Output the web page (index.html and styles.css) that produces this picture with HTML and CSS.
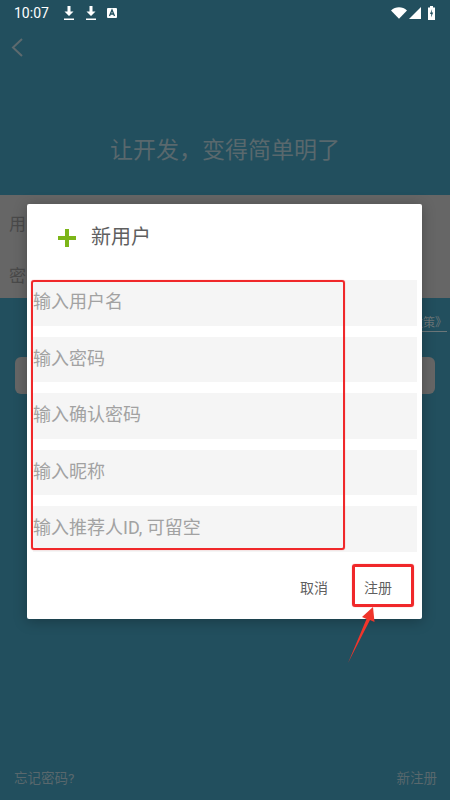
FILE: index.html
```html
<!DOCTYPE html>
<html>
<head lang="en">
    <meta charset="UTF-8">
    <title>新用户</title>
    <link rel="stylesheet" href="styles.css">
</head>
<body>
<div id="page">
    <div class="status">
        <span class="time">10:07</span>
        <svg class="st-icon" width="14" height="16" viewBox="0 0 14 16"><path d="M5.500 1h3v5.500h3L7 11 2.500 6.500h3z" fill="#fff"/><rect x="2" y="13.500" width="10" height="1.500" fill="#fff"/></svg>
        <svg class="st-icon" width="14" height="16" viewBox="0 0 14 16"><path d="M5.500 1h3v5.500h3L7 11 2.500 6.500h3z" fill="#fff"/><rect x="2" y="13.500" width="10" height="1.500" fill="#fff"/></svg>
        <svg class="st-icon" width="12" height="12" viewBox="0 0 12 12"><rect x="1" y="1" width="10" height="10" rx="1" fill="#fff"/><path d="M3.500 9 6 3l2.500 6M4.500 7h3" fill="none" stroke="#224f5e" stroke-width="1.300"/></svg>
        <span class="st-right">
            <svg class="wifi" width="16" height="12" viewBox="0 0 16 12"><path d="M0 3.500C4.500-.7 11.500-.7 16 3.500L8 11.800z" fill="#fff"/></svg>
            <svg class="signal" width="12" height="12" viewBox="0 0 12 12"><path d="M12 0v12H0z" fill="#fff"/></svg>
            <svg width="7" height="14" viewBox="0 0 7 14"><path d="M2 0h3v1.500h2V14H0V1.500h2z" fill="#fff"/><path d="M4.100 3 2 8h1.300L3 11.500 5.200 6.500H3.700z" fill="#224f5e"/></svg>
        </span>
    </div>
    <div class="back">
        <svg width="12" height="19" viewBox="0 0 12 19"><path d="M11 1 2 9.500 11 18" fill="none" stroke="#5d6a6e" stroke-width="2"/></svg>
    </div>
    <h1 class="slogan">让开发，变得简单明了</h1>
    <div class="form">
        <div class="form-row">用</div>
        <div class="form-row">密</div>
    </div>
    <div class="agree"><span>《隐私政策》</span></div>
    <div class="login-btn"></div>
    <div class="footer">
        <span>忘记密码?</span>
        <span>新注册</span>
    </div>
</div>

<div id="dialog">
    <div class="dialog-title">
        <svg width="18" height="18" viewBox="0 0 18 18"><path d="M7 0h4v7h7v4h-7v7H7v-7H0V7h7z" fill="#7cb518"/></svg>
        <span>新用户</span>
    </div>
    <div class="fields">
        <div class="field">输入用户名</div>
        <div class="field">输入密码</div>
        <div class="field">输入确认密码</div>
        <div class="field">输入昵称</div>
        <div class="field">输入推荐人ID, 可留空</div>
    </div>
    <div class="actions">
        <span class="action">取消</span>
        <span class="action">注册</span>
    </div>
</div>

<!-- red marks on top of the screenshot -->
<div class="mark mark-fields"></div>
<div class="mark mark-submit"></div>
<svg class="mark-arrow" width="30" height="58" viewBox="0 0 30 58"><path d="M1 57 19.500 13 15 11 26 1l1.500 15-4.500-2z" fill="#f0352b"/></svg>
</body>
</html>
```

FILE: styles.css
```css
* { margin: 0; padding: 0; box-sizing: border-box; }
body { width: 450px; height: 800px; overflow: hidden; background: #224f5e;
    font-family: "Roboto", "Noto Sans CJK SC", sans-serif; position: relative; }
#page { height: 800px; display: flex; flex-direction: column; color: #59686d; }

.status { height: 26px; display: flex; align-items: center; padding: 0 15px 0 14px; color: #fff; font-size: 14px; }
.time { width: 48px; }
.st-icon { margin-right: 8px; }
.st-right { margin-left: auto; display: flex; align-items: center; }
.wifi { margin-right: 2px; }
.signal { margin-right: 7px; }

.back { height: 42px; padding: 12px 0 0 11px; }
.slogan { font-size: 23px; font-weight: normal; line-height: 34px; text-align: center; margin-top: 66px; }

.form { height: 103px; margin-top: 27px; background: #666; padding-top: 4px; font-size: 17px; color: #4a4a4a; }
.form-row { height: 52px; line-height: 50px; padding-left: 9px; }

.agree { height: 47px; text-align: right; padding: 15px 3px 0 0; font-size: 12px; color: #6b7679; }
.agree span { border-bottom: 1px solid #6b7679; padding-bottom: 1px; }
.login-btn { height: 37px; margin: 12px 15px 0; background: #666; border-radius: 6px; }

.footer { margin-top: auto; height: 44px; display: flex; justify-content: space-between; padding: 0 13px 0 14px; font-size: 13.500px; line-height: 44px; }

#dialog { position: absolute; left: 27px; top: 204px; width: 395px; height: 415px; background: #fff; border-radius: 2px;
    box-shadow: 0 2px 14px rgba(0,0,0,.28); padding: 0 5px 0 6px; }
.dialog-title { height: 66px; display: flex; align-items: center; padding: 0 0 0 25px; font-size: 20px; line-height: 26px; color: #5f5f5f; }
.dialog-title span { margin-top: 0; }
.dialog-title svg { margin-right: 15px; margin-top: 2px; }
.fields { margin-top: 10px; display: flex; flex-direction: column; gap: 11px; }
.field { height: 45.500px; line-height: 43px; background: #f5f5f5; font-size: 18px; color: #a2a2a2; }
.actions { display: flex; justify-content: flex-end; padding: 23px 25px 0 0; gap: 36px; font-size: 14px; color: #5f5f5f; }
.action { line-height: 26px; }

.mark { position: absolute; border: 2px solid #f0282a; border-radius: 3px; box-shadow: 0 0 1px rgba(240,40,42,.7); }
.mark-fields { left: 31px; top: 280px; width: 314px; height: 270px; }
.mark-submit { left: 352px; top: 564px; width: 62px; height: 43px; border-width: 3px; }
.mark-arrow { position: absolute; left: 347px; top: 606px; }
```
